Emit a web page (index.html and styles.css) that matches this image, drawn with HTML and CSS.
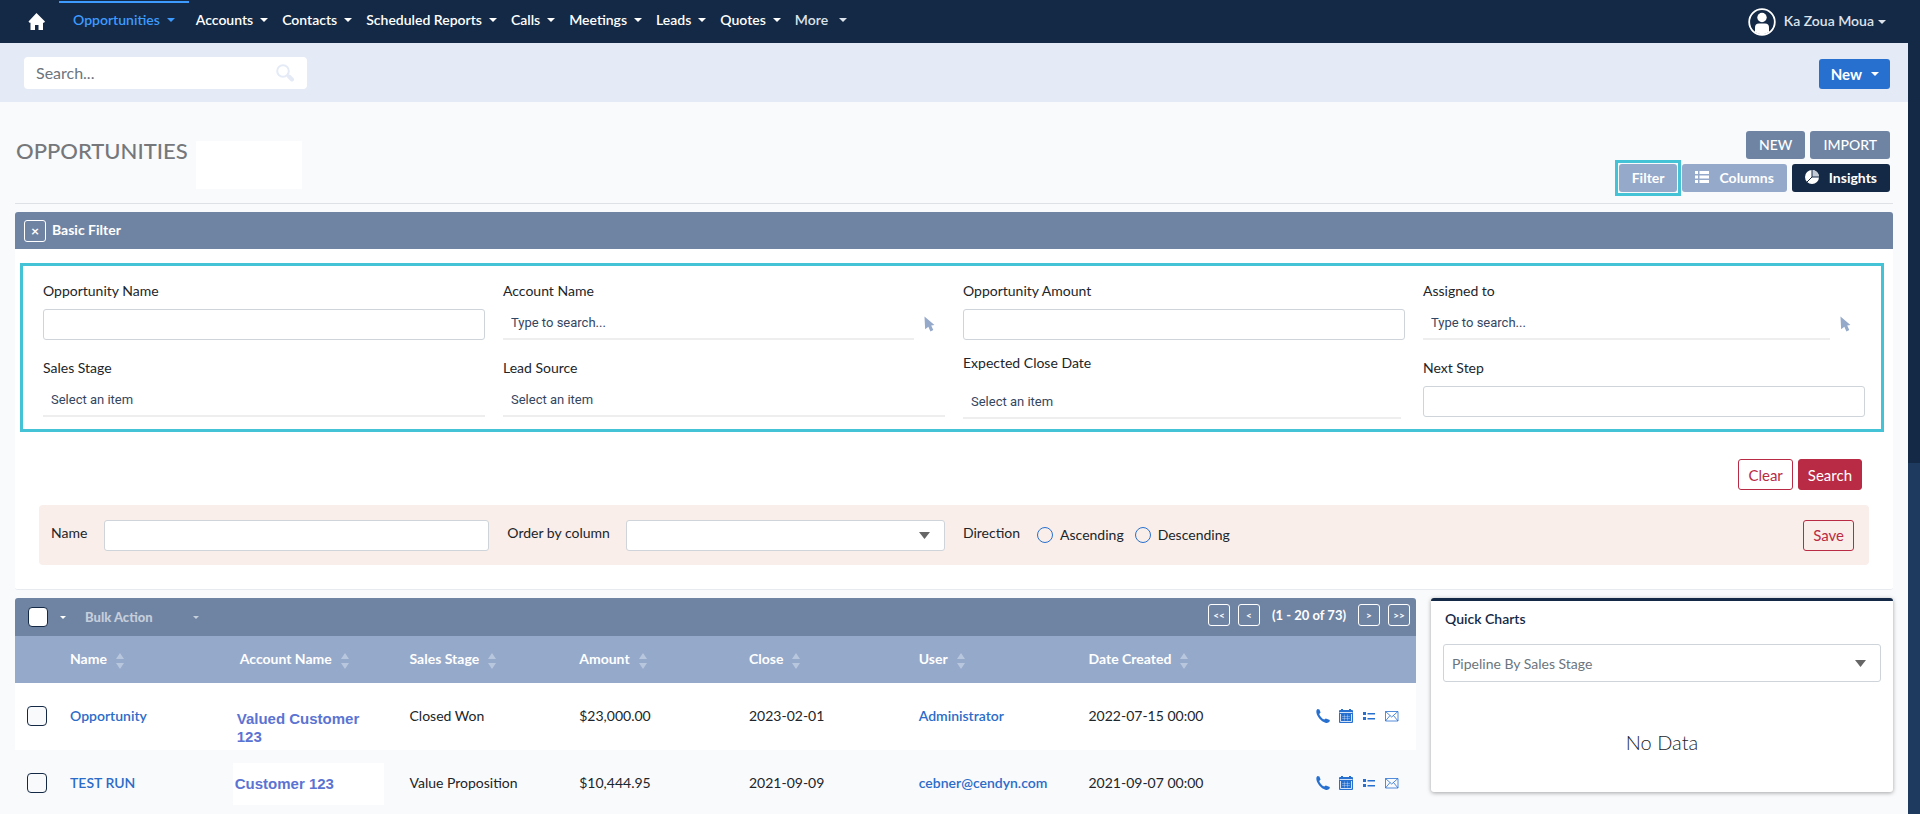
FILE: index.html
```html
<!DOCTYPE html>
<html lang="en">
<head>
    <meta charset="UTF-8">
    <meta name="viewport" content="width=device-width, initial-scale=1.0">
    <title>Opportunities</title>
    <link rel="stylesheet" href="styles.css">
</head>
<body>
<svg class="sprite" aria-hidden="true">
    <symbol id="i-phone" viewBox="0 0 14 14">
        <path d="M1.6 0 L3.4 0.6 L4.6 3.4 L3.2 4.9 C4 7.2 6 9.400 8.2 10.600 L9.800 9.400 L13.800 11 L13.600 12.600 C12.600 13.800 11 14.200 9.4 13.700 C5 12.200 1.2 7.800 0.4 3.4 C0.2 1.800 0.600 0.500 1.6 0 Z" fill="currentColor"/>
    </symbol>
    <symbol id="i-calendar" viewBox="0 0 14 14">
        <path d="M2 0h2v1h6v-1h2v1h1a1 1 0 0 1 1 1v11a1 1 0 0 1-1 1h-12a1 1 0 0 1-1-1v-11a1 1 0 0 1 1-1h1z" fill="currentColor"/>
        <path d="M0.500 3.500h13M1.500 5v7.500h11v-7.500" stroke="#fff" stroke-width="0.800" fill="none"/>
        <path d="M3 7.500h8M3 9.500h8M5.500 5.500v6M8.500 5.500v6" stroke="#fff" stroke-opacity="0.5" stroke-width="0.600" fill="none"/>
    </symbol>
    <symbol id="i-list" viewBox="0 0 14 14">
        <path d="M1 3h3v3h-3zM1 8h3v3h-3zM5.500 4h7.500v1.500h-7.500zM5.500 9h7.500v1.500h-7.500z" fill="currentColor"/>
    </symbol>
    <symbol id="i-mail" viewBox="0 0 14 14">
        <path d="M0.500 2.500h12.500v9.500h-12.500zM0.500 2.500l6.200 5.500 6.200-5.500M0.500 12l4.500-5.500M13 12l-4.500-5.500" fill="none" stroke="currentColor" stroke-width="0.800"/>
    </symbol>
    <symbol id="i-pointer" viewBox="0 0 12 16">
        <path d="M0.500 0 L11 9 L7.600 9.600 L9.800 14.400 L6.800 15.800 L4.600 11 L1.200 13.600 Z" fill="currentColor"/>
    </symbol>
    <symbol id="i-sort" viewBox="0 0 8 16">
        <path d="M4 0l4 6h-8zM0 10h8l-4 6z" fill="currentColor"/>
    </symbol>
</svg>

<nav class="navbar">
    <a class="home" href="#" aria-label="Home">
        <svg width="17" height="17" viewBox="0 0 17 17"><path d="M8.500 0l8.500 8.500-1 1.200h-1v7.300h-4.500v-5h-3.500v5h-4.500v-7.300h-1l-1-1.200z" fill="#fff"/></svg>
    </a>
    <ul class="menu">
        <li class="active"><a href="#">Opportunities<i class="caret"></i></a></li>
        <li><a href="#">Accounts<i class="caret"></i></a></li>
        <li><a href="#">Contacts<i class="caret"></i></a></li>
        <li><a href="#">Scheduled Reports<i class="caret"></i></a></li>
        <li><a href="#">Calls<i class="caret"></i></a></li>
        <li><a href="#">Meetings<i class="caret"></i></a></li>
        <li><a href="#">Leads<i class="caret"></i></a></li>
        <li><a href="#">Quotes<i class="caret"></i></a></li>
        <li class="more"><a href="#">More<i class="caret"></i></a></li>
    </ul>
    <a class="user" href="#">
        <svg width="28" height="28" viewBox="0 0 28 28">
            <circle cx="14" cy="14" r="12.800" fill="none" stroke="#fff" stroke-width="1.800"/>
            <circle cx="14" cy="9.500" r="4.700" fill="#fff"/>
            <path d="M7 24v-4.500q0-4 4-4h6q4 0 4 4v4.500q-7 4.500-14 0z" fill="#fff"/>
        </svg>
        <span>Ka Zoua Moua</span><i class="caret"></i>
    </a>
</nav>

<div class="page">
    <div class="search-bar">
        <div class="search-box">
            <input type="text" placeholder="Search..." aria-label="Search">
            <svg width="18" height="18" viewBox="0 0 18 18" fill="none" stroke="#e4eaf6"><circle cx="7" cy="7" r="5.800" stroke-width="2"/><path d="M13 12.500l3 3" stroke-width="4" stroke-linecap="round"/></svg>
        </div>
        <button class="btn-create">New<i class="caret"></i></button>
    </div>

    <main>
        <header class="page-head">
            <div class="title">
                <h1>OPPORTUNITIES</h1>
                <div class="blank"></div>
            </div>
            <div class="actions">
                <div class="action-row">
                    <button class="btn slate">NEW</button>
                    <button class="btn slate">IMPORT</button>
                </div>
                <div class="action-row">
                    <div class="marked"><button class="btn light">Filter</button></div>
                    <button class="btn light"><svg width="14" height="12" viewBox="0 0 14 12"><path d="M0 0h3v3h-3zM0 4.500h3v3h-3zM0 9h3v3h-3zM4.500 0h9.500v3h-9.500zM4.500 4.500h9.500v3h-9.500zM4.500 9h9.500v3h-9.500z" fill="#fff"/></svg>Columns</button>
                    <button class="btn dark"><svg width="14" height="14" viewBox="0 0 14 14"><circle cx="7" cy="7" r="7" fill="#fff"/><path d="M7 7v-7a7 7 0 0 1 7 7z" fill="#c4cad4"/><path d="M7 0v7h7M7 7l-5 5" stroke="#142945" fill="none"/></svg>Insights</button>
                </div>
            </div>
        </header>

        <section class="filter">
            <div class="filter-head">
                <button class="square close" aria-label="Close">×</button>
                <h2>Basic Filter</h2>
            </div>
            <form class="filter-body">
                <div class="fields">
                    <div class="field">
                        <label for="opp-name">Opportunity Name</label>
                        <input class="box" id="opp-name" type="text">
                    </div>
                    <div class="field">
                        <label for="acc-name">Account Name</label>
                        <div class="lookup">
                            <input class="line" id="acc-name" type="text" placeholder="Type to search...">
                            <svg width="12" height="16"><use href="#i-pointer"/></svg>
                        </div>
                    </div>
                    <div class="field">
                        <label for="amount">Opportunity Amount</label>
                        <input class="box" id="amount" type="text">
                    </div>
                    <div class="field">
                        <label for="assigned">Assigned to</label>
                        <div class="lookup wide">
                            <input class="line" id="assigned" type="text" placeholder="Type to search...">
                            <svg width="12" height="16"><use href="#i-pointer"/></svg>
                        </div>
                    </div>
                    <div class="field">
                        <label for="stage">Sales Stage</label>
                        <input class="line" id="stage" type="text" placeholder="Select an item">
                    </div>
                    <div class="field">
                        <label for="source">Lead Source</label>
                        <input class="line" id="source" type="text" placeholder="Select an item">
                    </div>
                    <div class="field date">
                        <label for="close-date">Expected Close Date</label>
                        <input class="line" id="close-date" type="text" placeholder="Select an item">
                    </div>
                    <div class="field">
                        <label for="next-step">Next Step</label>
                        <input class="box" id="next-step" type="text">
                    </div>
                </div>
                <div class="submit-row">
                    <button type="button" class="btn-red outline">Clear</button>
                    <button type="button" class="btn-red">Search</button>
                </div>
                <div class="save-bar">
                    <label class="caption" for="save-name">Name</label>
                    <input class="box save-name" id="save-name" type="text">
                    <label class="caption" for="order-by">Order by column</label>
                    <select class="box order-by" id="order-by"><option></option></select>
                    <span class="caption">Direction</span>
                    <div class="radios">
                        <label><input type="radio" name="direction">Ascending</label>
                        <label><input type="radio" name="direction">Descending</label>
                    </div>
                    <button type="button" class="btn-red outline save">Save</button>
                </div>
            </form>
        </section>

        <div class="columns">
            <section class="list">
                <div class="toolbar">
                    <input type="checkbox" aria-label="Select all">
                    <i class="caret small"></i>
                    <button class="bulk">Bulk Action<i class="caret small"></i></button>
                    <div class="pager">
                        <button class="square" aria-label="First page">&lt;&lt;</button>
                        <button class="square" aria-label="Previous page">&lt;</button>
                        <span>(1 - 20 of 73)</span>
                        <button class="square" aria-label="Next page">&gt;</button>
                        <button class="square" aria-label="Last page">&gt;&gt;</button>
                    </div>
                </div>
                <table>
                    <thead>
                    <tr>
                        <th class="check"></th>
                        <th>Name<svg width="8" height="16"><use href="#i-sort"/></svg></th>
                        <th>Account Name<svg width="8" height="16"><use href="#i-sort"/></svg></th>
                        <th>Sales Stage<svg width="8" height="16"><use href="#i-sort"/></svg></th>
                        <th>Amount<svg width="8" height="16"><use href="#i-sort"/></svg></th>
                        <th>Close<svg width="8" height="16"><use href="#i-sort"/></svg></th>
                        <th>User<svg width="8" height="16"><use href="#i-sort"/></svg></th>
                        <th>Date Created<svg width="8" height="16"><use href="#i-sort"/></svg></th>
                        <th></th>
                    </tr>
                    </thead>
                    <tbody>
                    <tr>
                        <td class="check"><input type="checkbox" aria-label="Select Opportunity"></td>
                        <td><a href="#">Opportunity</a></td>
                        <td class="account"><a href="#">Valued Customer 123</a></td>
                        <td>Closed Won</td>
                        <td>$23,000.00</td>
                        <td>2023-02-01</td>
                        <td><a href="#">Administrator</a></td>
                        <td>2022-07-15 00:00</td>
                        <td><div class="row-icons">
                            <svg width="14" height="14"><use href="#i-phone"/></svg>
                            <svg width="14" height="14"><use href="#i-calendar"/></svg>
                            <svg width="14" height="14"><use href="#i-list"/></svg>
                            <svg width="14" height="14"><use href="#i-mail"/></svg>
                        </div></td>
                    </tr>
                    <tr>
                        <td class="check"><input type="checkbox" aria-label="Select TEST RUN"></td>
                        <td><a href="#">TEST RUN</a></td>
                        <td class="account patch"><a href="#">Customer 123</a></td>
                        <td>Value Proposition</td>
                        <td>$10,444.95</td>
                        <td>2021-09-09</td>
                        <td><a href="#">cebner@cendyn.com</a></td>
                        <td>2021-09-07 00:00</td>
                        <td><div class="row-icons">
                            <svg width="14" height="14"><use href="#i-phone"/></svg>
                            <svg width="14" height="14"><use href="#i-calendar"/></svg>
                            <svg width="14" height="14"><use href="#i-list"/></svg>
                            <svg width="14" height="14"><use href="#i-mail"/></svg>
                        </div></td>
                    </tr>
                    </tbody>
                </table>
            </section>

            <aside class="charts">
                <h2><label for="chart">Quick Charts</label></h2>
                <select class="box" id="chart"><option>Pipeline By Sales Stage</option></select>
                <p>No Data</p>
            </aside>
        </div>
    </main>
</div>
</body>
</html>
```
FILE: styles.css
```css
* {
    box-sizing: border-box;
}

body {
    margin: 0;
    height: 100vh;
    overflow: hidden;
    background: linear-gradient(#142945 463px, #1e3a5f 463px);
    font-family: Lato, "Liberation Sans", sans-serif;
    font-size: 14px;
    line-height: 20px;
    color: #212529;
}

.sprite {
    position: absolute;
    width: 0;
    height: 0;
}

h1, h2, p, ul {
    margin: 0;
    padding: 0;
}

a {
    color: inherit;
    text-decoration: none;
}

button, input, select {
    font-family: inherit;
    font-size: 14px;
}

button {
    cursor: pointer;
}

.caret {
    display: inline-block;
    border: 4px solid transparent;
    border-top-color: currentColor;
    border-bottom: 0;
}

.caret.small {
    border-width: 3px 3px 0;
}

/* top navigation */
.navbar {
    display: flex;
    align-items: center;
    height: 43px;
    padding: 0 20px 0 28px;
    background: #142945;
    color: #fff;
}

.home {
    display: flex;
}

.menu {
    display: flex;
    align-self: stretch;
    margin-left: 14px;
    list-style: none;
    font-weight: 600;
}

.menu a {
    display: flex;
    align-items: center;
    gap: 7px;
    height: 40px;
    padding: 0 7px;
}

.menu .active {
    margin-top: 1px;
    border-top: 2px solid #3d9bff;
    color: #3d9bff;
}

.menu .active a {
    height: 34px;
    padding: 0 14px;
}

.menu .more a {
    gap: 11px;
    color: #dde3ec;
}

.user {
    display: flex;
    align-items: center;
    gap: 4px;
    margin-left: auto;
    padding-right: 14px;
    font-weight: 600;
    color: #dde3ec;
}

.user svg {
    margin-right: 4px;
}

.user span {
    padding-bottom: 2px;
}

/* page area leaves the dark edge visible on the right */
.page {
    margin-right: 12px;
    min-height: calc(100vh - 43px);
    background: #f9fafc;
}

.search-bar {
    display: flex;
    align-items: center;
    justify-content: space-between;
    height: 59px;
    padding: 0 18px 0 24px;
    background: #e4eaf6;
}

.search-box {
    display: flex;
    align-items: center;
    width: 283px;
    height: 32px;
    padding: 0 13px 0 12px;
    border-radius: 4px;
    background: #fff;
}

.search-box input {
    flex: 1;
    min-width: 0;
    padding: 0;
    border: 0;
    background: none;
    font-size: 16px;
}

.search-box input::placeholder {
    color: #6c757d;
}

.btn-create {
    display: flex;
    align-items: center;
    gap: 9px;
    height: 30px;
    margin-top: 2px;
    padding: 0 11px 0 12px;
    border: 0;
    border-radius: 3px;
    background: #2870d0;
    color: #fff;
    font-size: 15px;
    font-weight: bold;
}

main {
    padding: 0 15px;
}

.page-head {
    display: flex;
    justify-content: space-between;
    height: 102px;
    padding: 29px 3px 0 1px;
    border-bottom: 1px solid #dee2e6;
}

.title {
    display: flex;
    gap: 8px;
    padding-top: 10px;
}

.title h1 {
    font-size: 22px;
    font-weight: 500;
    color: #75777a;
}

.blank {
    width: 106px;
    height: 48px;
    background: #fff;
}

.action-row {
    display: flex;
    justify-content: flex-end;
    gap: 5px;
    margin-bottom: 5px;
}

.btn {
    display: flex;
    align-items: center;
    gap: 10px;
    height: 28px;
    padding: 0 13px 2px;
    border: 0;
    border-radius: 3px;
    color: #fff;
    font-weight: bold;
}

.btn.slate {
    background: #6f84a3;
    font-weight: 500;
}

.btn.light {
    background: #95a9ca;
}

.btn.dark {
    background: #142945;
}

.marked {
    margin: -4px;
    padding: 1px;
    border: 3px solid #44c2d6;
}

/* filter panel */
.filter {
    margin-top: 8px;
    border-bottom: 1px solid #e7eaee;
    border-radius: 3px;
    background: #fff;
}

.filter-head {
    display: flex;
    align-items: center;
    gap: 6px;
    height: 37px;
    padding: 0 9px;
    border-radius: 3px 3px 0 0;
    background: #6f84a3;
    color: #fff;
}

.filter-head h2 {
    padding-bottom: 2px;
    font-size: 14px;
    font-weight: bold;
}

.square {
    display: inline-flex;
    align-items: center;
    justify-content: center;
    width: 22px;
    height: 22px;
    padding: 0;
    border: 1px solid #fff;
    border-radius: 3px;
    background: none;
    color: #fff;
    font-size: 10px;
    font-weight: bold;
}

.square.close {
    font-size: 14px;
}

.filter-body {
    padding: 14px 9px 24px 5px;
}

.fields {
    display: grid;
    grid-template-columns: repeat(4, 1fr);
    gap: 18px;
    padding: 15px 16px 10px 20px;
    border: 3px solid #44c2d6;
}

.field {
    display: flex;
    flex-direction: column;
    justify-content: space-between;
    height: 59px;
}

.box {
    width: 100%;
    height: 31px;
    padding: 0 8px;
    border: 1px solid #ced4da;
    border-radius: 3px;
    background: #fff;
}

.line {
    width: 100%;
    height: 32px;
    padding: 0 8px 2px;
    border: 0;
    border-bottom: 2px solid #eee;
    background: none;
    font-family: Roboto, sans-serif;
    font-size: 13px;
}

.line::placeholder {
    color: #34465f;
}

.lookup {
    display: flex;
    align-items: center;
    gap: 10px;
    padding-right: 10px;
    color: #95a9ca;
}

.lookup.wide {
    padding-right: 14px;
}

.date {
    height: 66px;
    margin: -5px 4px 0 0;
}

select {
    appearance: none;
}

select.box {
    background: #fff url("data:image/svg+xml,%3Csvg xmlns='http://www.w3.org/2000/svg' width='11' height='7'%3E%3Cpath d='M0 0h11l-5.500 7z' fill='%23666'/%3E%3C/svg%3E") no-repeat right 14px center;
}

.submit-row {
    display: flex;
    justify-content: flex-end;
    gap: 5px;
    margin: 27px 22px 15px 0;
}

.btn-red {
    height: 31px;
    padding: 0 9px;
    border: 1px solid #b92b45;
    border-radius: 3px;
    background: #b92b45;
    color: #fff;
    font-size: 15px;
}

.btn-red.outline {
    background: none;
    color: #b92b45;
}

.save-bar {
    display: flex;
    align-items: center;
    height: 60px;
    margin: 0 15px 0 19px;
    padding: 0 15px 0 12px;
    border-radius: 4px;
    background: #f9eeea;
}

.caption {
    padding-bottom: 4px;
}

.save-name {
    flex: 0 1 385px;
    margin: 0 18px 0 17px;
}

.order-by {
    flex: 0 1 319px;
    margin: 0 18px 0 16px;
}

.radios {
    display: flex;
    gap: 11px;
    margin-left: 17px;
}

.radios label {
    display: flex;
    align-items: center;
    gap: 7px;
}

input[type="radio"] {
    appearance: none;
    width: 16px;
    height: 16px;
    margin: 0;
    border: 1px solid #2870d0;
    border-radius: 50%;
    background: none;
}

.save {
    margin-left: auto;
}

/* list and charts */
.columns {
    display: grid;
    grid-template-columns: minmax(0, 1401fr) minmax(0, 462fr);
    align-items: start;
    gap: 15px;
    margin-top: 8px;
}

.toolbar {
    display: flex;
    align-items: center;
    height: 38px;
    padding: 0 6px 0 13px;
    border-radius: 3px 3px 0 0;
    background: #6f84a3;
    color: #fff;
}

input[type="checkbox"] {
    appearance: none;
    display: block;
    width: 20px;
    height: 20px;
    margin: 0;
    border: 1px solid #142945;
    border-radius: 4px;
    background: #fff;
}

.toolbar > .caret {
    margin: 0 19px 0 12px;
}

.bulk {
    display: flex;
    align-items: center;
    gap: 40px;
    padding: 0;
    border: 0;
    background: none;
    color: #c5cedb;
    font-size: 13px;
    font-weight: 900;
}

.pager {
    display: flex;
    align-items: center;
    gap: 8px;
    margin: 0 0 4px auto;
    font-size: 13px;
    font-weight: bold;
}

.pager span {
    margin: 0 4px;
}

table {
    width: 100%;
    border-collapse: collapse;
    table-layout: fixed;
}

th, td {
    padding: 0 0 2px 12px;
    text-align: left;
}

th {
    height: 47px;
    background: #95a9ca;
    color: #fff;
    font-weight: bold;
}

th svg {
    margin: 5px 0 -5px 9px;
    color: #b9c7de;
}

.check {
    width: 43px;
}

td {
    height: 67px;
}

td a {
    font-weight: 600;
    color: #2b6cc9;
}

tbody tr:first-child {
    background: #fff;
}

tbody input[type="checkbox"] {
    background: #f9fafc;
}

.account {
    padding: 27px 36px 0 9px;
    vertical-align: top;
    font-family: "Liberation Sans", Arial, sans-serif;
    font-size: 15px;
    line-height: 18px;
}

.account a {
    color: #5b73d2;
    font-weight: bold;
}

.account.patch {
    padding: 13px 14px 0 5px;
}

.patch a {
    display: block;
    padding-left: 2px;
    background: #fff;
    line-height: 42px;
}

.row-icons {
    display: flex;
    justify-content: flex-end;
    gap: 9px;
    padding-right: 17px;
    color: #2870d0;
}

.charts {
    height: 194px;
    padding: 8px 12px;
    border-top: 3px solid #142945;
    border-radius: 3px;
    background: #fff;
    box-shadow: 0 1px 4px rgba(0, 0, 0, 0.35);
}

.charts h2 {
    padding-left: 2px;
    font-size: 14px;
    font-weight: 600;
    color: #142945;
}

.charts .box {
    height: 38px;
    margin-top: 15px;
    color: #6c757d;
}

.charts p {
    margin-top: 50px;
    text-align: center;
    font-size: 20px;
    font-weight: 300;
}
```
